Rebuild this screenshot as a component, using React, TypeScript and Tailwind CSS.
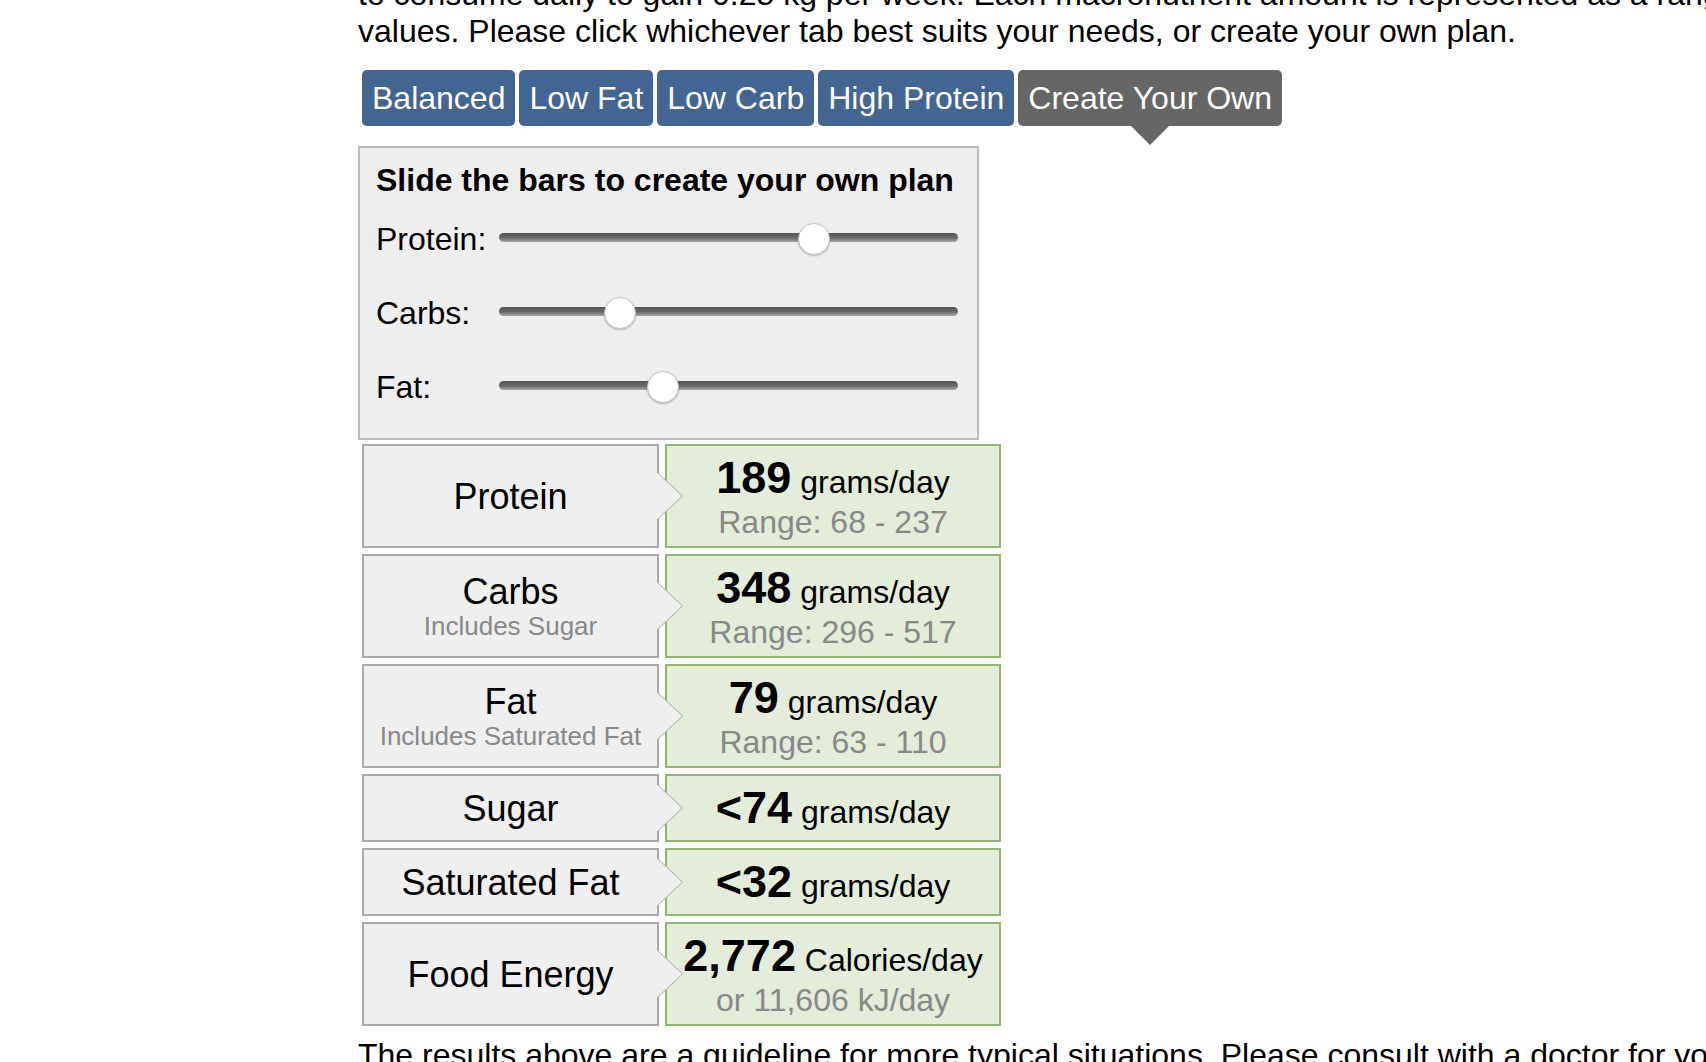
import React from "react";

type Row = {
  label: string;
  sub?: string;
  value: string;
  unit: string;
  second?: string;
  tall: boolean;
};

const rows: Row[] = [
  { label: "Protein", value: "189", unit: "grams/day", second: "Range: 68 - 237", tall: true },
  { label: "Carbs", sub: "Includes Sugar", value: "348", unit: "grams/day", second: "Range: 296 - 517", tall: true },
  { label: "Fat", sub: "Includes Saturated Fat", value: "79", unit: "grams/day", second: "Range: 63 - 110", tall: true },
  { label: "Sugar", value: "<74", unit: "grams/day", tall: false },
  { label: "Saturated Fat", value: "<32", unit: "grams/day", tall: false },
  { label: "Food Energy", value: "2,772", unit: "Calories/day", second: "or 11,606 kJ/day", tall: true },
];

const tabs = ["Balanced", "Low Fat", "Low Carb", "High Protein", "Create Your Own"];

const sliders = [
  { label: "Protein:", thumb: "left-[299px]" },
  { label: "Carbs:", thumb: "left-[105px]" },
  { label: "Fat:", thumb: "left-[148px]" },
];

function Arrow() {
  return (
    <svg
      className="absolute right-[-26px] top-1/2 -translate-y-1/2 z-10 overflow-visible"
      width="26"
      height="48"
      viewBox="0 0 26 48"
    >
      <polygon points="0,0 25.5,24 0,48" fill="#efefef" />
      <polyline points="0,0 25.5,24 0,48" fill="none" stroke="#a9a9a9" strokeWidth="1" />
    </svg>
  );
}

export default function App() {
  return (
    <div className="w-[1706px] h-[1062px] overflow-hidden bg-white text-black font-['Liberation_Sans',Arial,sans-serif]">
      <div className="pl-[358px] mt-[-24.3px]">
        <div className="text-[32px] leading-[36.8px] whitespace-nowrap">
          <div>to consume daily to gain 0.25 kg per week. Each macronutrient amount is represented as a range of</div>
          <div>values. Please click whichever tab best suits your needs, or create your own plan.</div>
        </div>

        <div className="mt-[20.7px] ml-[4px] flex gap-[4px] h-[56px]">
          {tabs.map((t, i) => {
            const active = i === tabs.length - 1;
            return (
              <div
                key={t}
                className={
                  "relative h-[56px] px-[10px] rounded-[5px] flex items-center text-white text-[32px] leading-[36.8px] whitespace-nowrap " +
                  (active ? "bg-[#666666]" : "bg-[#426592]")
                }
              >
                {t}
                {active && (
                  <div className="absolute top-full left-1/2 -translate-x-1/2 w-0 h-0 border-l-[19px] border-r-[19px] border-t-[19px] border-l-transparent border-r-transparent border-t-[#666666]" />
                )}
              </div>
            );
          })}
        </div>

        <div className="mt-[20.5px] w-[621px] border-2 border-[#bdbdbd] bg-[#eeeeee] pl-[16px] pr-[19px] pt-[14px] pb-[16px]">
          <div className="font-bold text-[32px] leading-[36.8px] whitespace-nowrap mb-[1px]">
            Slide the bars to create your own plan
          </div>
          {sliders.map((s) => (
            <div key={s.label} className="flex items-center h-[74px]">
              <div className="w-[123px] text-[32px] leading-[36.8px] pt-[5px]">{s.label}</div>
              <div className="relative flex-1 h-[9px] rounded-full bg-[linear-gradient(to_bottom,#555555,#6a6a6a_55%,#a8a8a8)]">
                <div
                  className={
                    "absolute top-[-10px] w-[32px] h-[32px] rounded-full bg-white border border-[#c4c4c4] shadow-[0_1px_2px_rgba(0,0,0,0.25)] " +
                    s.thumb
                  }
                />
              </div>
            </div>
          ))}
        </div>

        <div className="mt-[4px] ml-[4px] flex flex-col gap-[6px]">
          {rows.map((r) => (
            <div key={r.label} className="flex gap-[6px]">
              <div
                className={
                  "relative w-[297px] border-2 border-[#a9a9a9] bg-[#efefef] flex flex-col items-center justify-center " +
                  (r.tall ? "h-[104px]" : "h-[68px]")
                }
              >
                <div className="text-[36px] leading-[41.4px] whitespace-nowrap">{r.label}</div>
                {r.sub && (
                  <div className="text-[26px] leading-[29.9px] text-[#888888] whitespace-nowrap">{r.sub}</div>
                )}
                <Arrow />
              </div>
              <div
                className={
                  "w-[336px] border-2 border-[#91b46e] bg-[#e3edda] flex flex-col items-center justify-center " +
                  (r.tall ? "h-[104px]" : "h-[68px]")
                }
              >
                <div className="text-[45px] leading-[52px] font-bold whitespace-nowrap">
                  {r.value}
                  <span className="text-[32px] leading-[36.8px] font-normal"> {r.unit}</span>
                </div>
                {r.second && (
                  <div className="text-[32px] leading-[36.8px] text-[#888888] whitespace-nowrap">{r.second}</div>
                )}
              </div>
            </div>
          ))}
        </div>

        <div className="mt-[11px] text-[32px] leading-[36.8px] whitespace-nowrap">
          The results above are a guideline for more typical situations. Please consult with a doctor for your specific requirements if you have any special conditions.
        </div>
      </div>
    </div>
  );
}
